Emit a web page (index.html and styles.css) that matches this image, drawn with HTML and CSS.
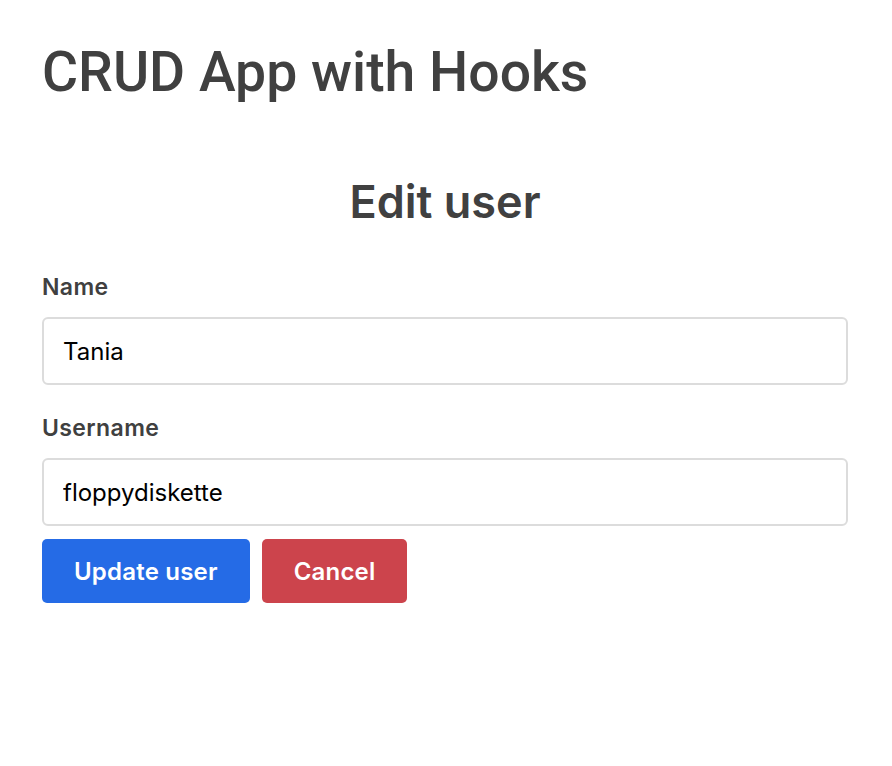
FILE: index.html
```html
<!DOCTYPE html>
<html>
<head>
<meta charset="utf-8">
<link rel="stylesheet" href="styles.css">
</head>
<body>
<div class="container">
  <h1 class="title">CRUD App with Hooks</h1>
  <div class="panel">
    <h2 class="subtitle">Edit user</h2>
    <form class="form">
      <label class="label">Name</label>
      <input class="input" type="text" value="Tania">
      <label class="label">Username</label>
      <input class="input" type="text" value="floppydiskette">
      <div class="actions">
        <button type="button" class="btn btn-primary">Update user</button>
        <button type="button" class="btn btn-danger">Cancel</button>
      </div>
    </form>
  </div>
</div>
</body>
</html>
```
FILE: styles.css
```css
html, body {
  margin: 0;
  padding: 0;
  background: #fff;
}
body {
  font-family: "Inter", "Noto Sans", sans-serif;
  color: #404040;
}
.container {
  padding: 37px 44px 0 42px;
}
.title {
  font-family: "Roboto", "Inter", sans-serif;
  font-weight: 500;
  font-size: 55.3px;
  line-height: 72px;
  margin: 0;
}
.panel {
  margin-top: 63px;
}
.subtitle {
  text-align: center;
  font-size: 45px;
  font-weight: 600;
  line-height: 60px;
  margin: 0 0 41px;
}
.form {
  display: flex;
  flex-direction: column;
}
.label {
  font-size: 23px;
  font-weight: 600;
  letter-spacing: 0.4px;
  line-height: 28px;
  margin-bottom: 16px;
}
.input {
  box-sizing: border-box;
  height: 68px;
  border: 2px solid #dcdcdc;
  border-radius: 6px;
  padding: 0 19px;
  font-family: "Inter", sans-serif;
  font-size: 24px;
  color: #000;
  margin-bottom: 29px;
  outline: none;
}
.actions {
  display: flex;
  gap: 12px;
  margin-top: -16px;
}
.btn {
  height: 64px;
  border: none;
  border-radius: 5px;
  color: #fff;
  font-family: "Inter", sans-serif;
  font-size: 24px;
  font-weight: 600;
  letter-spacing: 0.2px;
  padding: 0 32px;
}
.btn-primary { background: #256be6; }
.btn-danger { background: #cc444c; }
```
